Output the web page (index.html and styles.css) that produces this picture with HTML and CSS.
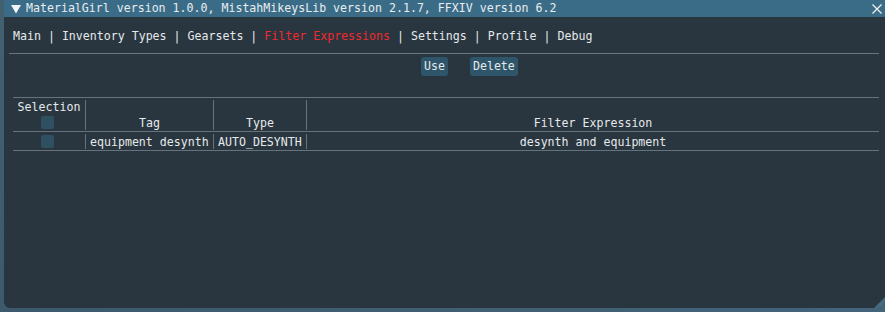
FILE: index.html
```html
<!DOCTYPE html>
<html>
    <head>
        <title>MaterialGirl</title>
        <meta charset="UTF-8">
        <link rel="stylesheet" href="styles.css">
    </head>
    <body>
        <div class="window">
            <div class="titlebar">
                <svg class="collapse" width="10" height="9" viewBox="0 0 10 9"><polygon points="0,0 10,0 5,8.5" fill="#f2f4f5"/></svg>
                <span class="title">MaterialGirl version 1.0.0, MistahMikeysLib version 2.1.7, FFXIV version 6.2</span>
                <svg class="close" width="10" height="10" viewBox="0 0 10 10"><path d="M0.5 0.5 L9.5 9.5 M9.5 0.5 L0.5 9.5" stroke="#f2f4f5" stroke-width="1.2"/></svg>
            </div>
            <div class="content">
                <!--TAB BAR-->
                <div class="tabs"><span>Main</span> | <span>Inventory Types</span> | <span>Gearsets</span> | <span class="active">Filter Expressions</span> | <span>Settings</span> | <span>Profile</span> | <span>Debug</span></div>
                <div class="separator"></div>
                <div class="actions">
                    <button class="btn">Use</button>
                    <button class="btn">Delete</button>
                </div>
                <div class="table">
                    <div class="row head">
                        <div class="cell sel">
                            <span>Selection</span>
                            <span class="checkbox"></span>
                        </div>
                        <div class="cell col center bottom">Tag</div>
                        <div class="cell col center bottom">Type</div>
                        <div class="cell col center bottom">Filter Expression</div>
                    </div>
                    <div class="row">
                        <div class="cell sel"><span class="checkbox"></span></div>
                        <div class="cell col">equipment desynth</div>
                        <div class="cell col">AUTO_DESYNTH</div>
                        <div class="cell col center">desynth and equipment</div>
                    </div>
                </div>
            </div>
            <div class="grip"></div>
        </div>
    </body>
</html>
```

FILE: styles.css
```css
body {
    margin: 0;
    padding: 0;
    width: 885px;
    height: 312px;
    overflow: hidden;
    background: linear-gradient(160deg, #42606f 0%, #3c5a6b 50%, #43647a 100%);
    font-family: "DejaVu Sans Mono", "Liberation Mono", monospace;
    font-size: 11.6px;
    color: #e6e9eb;
}
.window {
    position: relative;
    margin-left: 4px;
    width: 881px;
    height: 308px;
    background-color: #29363f;
    border-radius: 0 0 6px 6px;
    overflow: hidden;
}
.titlebar {
    height: 17px;
    background-color: #3b6c87;
    display: flex;
    align-items: center;
    padding-left: 7px;
    padding-right: 2px;
}
.collapse {
    margin-top: 1px;
}
.title {
    margin-left: 5px;
    line-height: 17px;
    flex: 1;
    color: #e9edf0;
}
.close {
    margin-right: 1px;
}
.content {
    padding: 0 6px 0 5px;
}
.tabs {
    padding-left: 4px;
    padding-top: 12px;
    line-height: 14px;
    height: 14px;
    white-space: nowrap;
}
.active {
    color: #f2282e;
}
.separator {
    margin-top: 10px;
    height: 1px;
    background-color: #6a7780;
}
.actions {
    display: flex;
    gap: 22px;
    padding-left: 412px;
    margin-top: 3px;
    height: 19px;
}
.btn {
    font-family: inherit;
    font-size: inherit;
    color: #e6e9eb;
    background-color: #2e5569;
    border: none;
    border-radius: 3px;
    padding: 0 3px;
    height: 19px;
    line-height: 19px;
}
.table {
    margin-top: 21px;
    margin-left: 4px;
    border-top: 1px solid #65737c;
}
.row {
    display: grid;
    grid-template-columns: 72px 128px 93px 1fr;
    border-bottom: 1px solid #65737c;
    height: 18px;
}
.row.head {
    height: 33px;
}
.cell {
    margin: 2px 0 1px 0;
    line-height: 14px;
    display: flex;
    align-items: center;
    padding-left: 4px;
    white-space: nowrap;
}
.col {
    border-left: 1px solid #65737c;
}
.center {
    justify-content: center;
    padding-left: 0;
}
.bottom {
    align-items: flex-end;
}
.sel {
    flex-direction: column;
    align-items: center;
    justify-content: flex-start;
    padding-left: 0;
    gap: 2px;
}
.row:not(.head) .sel {
    justify-content: center;
}
.checkbox {
    display: block;
    width: 13px;
    height: 13px;
    margin-right: 3px;
    background-color: #2f5061;
    border-radius: 2px;
}
.grip {
    position: absolute;
    right: 0;
    bottom: 0;
    width: 11px;
    height: 11px;
    background-color: #45697d;
    clip-path: polygon(100% 0, 100% 100%, 0 100%);
}
```
